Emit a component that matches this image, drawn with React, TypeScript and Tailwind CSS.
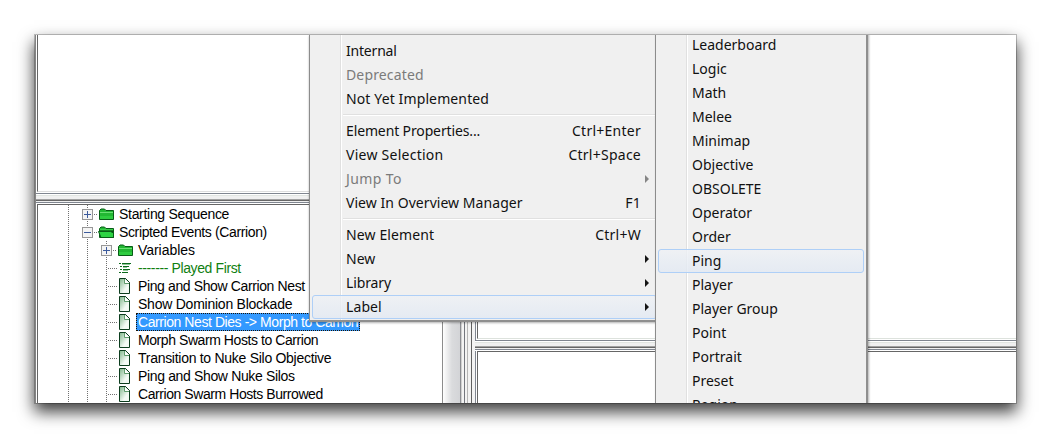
import React from "react";

type Entry = { label: string; keys?: string; sub?: boolean; muted?: boolean; active?: boolean; track?: string } | "separator";

const mainMenu: Entry[] = [
  { label: "Internal", track: "tracking-[-0.2px]" },
  { label: "Deprecated", muted: true, track: "tracking-[0.15px]" },
  { label: "Not Yet Implemented", track: "tracking-[0.12px]" },
  "separator",
  { label: "Element Properties...", keys: "Ctrl+Enter", track: "tracking-[-0.13px]" },
  { label: "View Selection", keys: "Ctrl+Space", track: "tracking-[0.26px]" },
  { label: "Jump To", sub: true, muted: true, track: "tracking-[0.4px]" },
  { label: "View In Overview Manager", keys: "F1", track: "tracking-[0.05px]" },
  "separator",
  { label: "New Element", keys: "Ctrl+W", track: "tracking-[0.12px]" },
  { label: "New", sub: true },
  { label: "Library", sub: true, track: "tracking-[-0.12px]" },
  { label: "Label", sub: true, active: true, track: "tracking-[0.1px]" },
];

const labelMenu: Entry[] = [
  "Leaderboard", "Logic", "Math", "Melee", "Minimap", "Objective", "OBSOLETE", "Operator",
  "Order", "Ping", "Player", "Player Group", "Point", "Portrait", "Preset", "Region",
].map((label) => ({ label, active: label === "Ping" }));

function MenuRows({ entries }: { entries: Entry[] }) {
  return (
    <>
      {entries.map((e, i) =>
        e === "separator" ? (
          <div key={i} className="ml-[31px] flex h-2 flex-col justify-center">
            <div className="h-px bg-[#e0e0e0]" />
            <div className="h-px bg-white" />
          </div>
        ) : (
          <div
            key={i}
            className={
              "relative flex h-6 items-center leading-6 " +
              (e.active
                ? "rounded-[3px] border border-[#aecff7] bg-linear-to-b from-[#eef1f5]/80 to-[#e2e9f3]/80 pl-[33px] pr-[15px] "
                : "pl-[34px] pr-[16px] ") +
              (e.muted ? "text-[#7b7b7b]" : "text-[#111]")
            }
          >
            <span className={"grow whitespace-pre " + (e.track ?? "")}>{e.label}</span>
            {e.keys && <span className="tracking-[0.25px]">{e.keys}</span>}
            {e.sub && (
              <svg className="-mr-[8px]" width="4" height="8" viewBox="0 0 4 8">
                <path d="M0 0L4 4L0 8Z" fill={e.muted ? "#858585" : "#151515"} />
              </svg>
            )}
          </div>
        ),
      )}
    </>
  );
}

function Toggle({ open }: { open?: boolean }) {
  return (
    <svg width="11" height="11" viewBox="0 0 11 11" className="relative shrink-0" shapeRendering="crispEdges">
      <rect x=".5" y=".5" width="10" height="10" fill="#f4f4f4" stroke="#979797" />
      <path d={open ? "M2 5.5H9" : "M2 5.5H9M5.5 2V9"} stroke="#3b5a9c" />
    </svg>
  );
}

function Folder({ open }: { open?: boolean }) {
  return (
    <svg width="17" height="13" viewBox="0 0 17 13" className="shrink-0">
      <path d="M1.5 11.5V2.5L3 1H6.5L8 2.5H15.5V11.5Z" fill="#22b833" stroke="#075c16" />
      {open ? (
        <>
          <path d="M2 3.5H15" stroke="#3bd04a" />
          <path d="M2 4.5H15V6H2Z" fill="#064b12" />
          <path d="M.5 5.5H12.5L15.5 7V11.5H3Z" fill="#2ed344" stroke="#075c16" />
        </>
      ) : (
        <>
          <path d="M2 4.5H15" stroke="#6be074" />
          <path d="M2 8H15V11H2Z" fill="#2ecc40" />
        </>
      )}
    </svg>
  );
}

function Page() {
  return (
    <svg width="11" height="16" viewBox="0 0 11 16" className="shrink-0">
      <defs>
        <linearGradient id="sheet" x1="0" y1="0" x2="1" y2="1">
          <stop offset="0" stopColor="#7fb58a" />
          <stop offset=".65" stopColor="#f4faf5" />
        </linearGradient>
      </defs>
      <path d="M.5 .5H6.5L10.5 4.5V15.5H.5Z" fill="url(#sheet)" stroke="#0b3c1d" />
      <path d="M5.5 1V5.5H10" fill="none" stroke="#5f9b6d" />
      <path d="M6 1L10 5H6Z" fill="#fff" />
      <path d="M6.5 .5L10.5 4.5" stroke="#0b3c1d" strokeDasharray="1.4 .9" />
    </svg>
  );
}

function Lines() {
  return (
    <svg width="12" height="12" viewBox="0 0 12 12" className="shrink-0" shapeRendering="crispEdges">
      <path d="M0 1.5H2M3 1.5H12M1 4.5H3M4 4.5H10M1 7.5H3M4 7.5H11M0 10.5H2M3 10.5H9" stroke="#0b6a1c" />
      <path d="M3 2.5H11M4 5.5H8M4 8.5H9" stroke="#8fc898" />
    </svg>
  );
}

const dotsDown = "w-px shrink-0 bg-[linear-gradient(#707070_50%,#ffffff_50%)] bg-[length:1px_2px] ";
const dotsAcross = "h-px shrink-0 bg-[linear-gradient(90deg,#707070_50%,#ffffff_50%)] bg-[length:2px_1px] ";

type TreeNode = { text: string; depth: number; icon: "folder" | "open" | "page" | "lines"; track: string; selected?: boolean };
const nodes: TreeNode[] = [
  { text: "Starting Sequence", depth: 0, icon: "folder", track: "tracking-[-0.3px]" },
  { text: "Scripted Events (Carrion)", depth: 0, icon: "open", track: "tracking-[-0.37px]" },
  { text: "Variables", depth: 1, icon: "folder", track: "tracking-[-0.05px]" },
  { text: "------- Played First", depth: 1, icon: "lines", track: "tracking-[-0.38px]" },
  { text: "Ping and Show Carrion Nest", depth: 1, icon: "page", track: "tracking-[-0.38px]" },
  { text: "Show Dominion Blockade", depth: 1, icon: "page", track: "tracking-[-0.24px]" },
  { text: "Carrion Nest Dies -> Morph to Carrion", depth: 1, icon: "page", track: "tracking-[-0.43px]", selected: true },
  { text: "Morph Swarm Hosts to Carrion", depth: 1, icon: "page", track: "tracking-[-0.43px]" },
  { text: "Transition to Nuke Silo Objective", depth: 1, icon: "page", track: "tracking-[-0.28px]" },
  { text: "Ping and Show Nuke Silos", depth: 1, icon: "page", track: "tracking-[-0.35px]" },
  { text: "Carrion Swarm Hosts Burrowed", depth: 1, icon: "page", track: "tracking-[-0.43px]" },
];

function TreeRow({ node }: { node: TreeNode }) {
  const folder = node.icon === "folder" || node.icon === "open";
  return (
    <div className="flex h-[18px] items-stretch pl-[30px]">
      <span className={dotsDown} />
      {node.depth === 1 ? (
        <>
          <span className="w-[18px] shrink-0" />
          <span className={dotsDown} />
        </>
      ) : null}
      <span className={folder ? "w-[13px] shrink-0" : "w-[18px] shrink-0"} />
      {folder ? (
        <span className="relative flex w-4 shrink-0 items-center pt-px">
          <span className={dotsDown + "absolute left-[5px] top-0 h-full"} />
          <Toggle open={node.icon === "open"} />
          <span className={dotsAcross + "ml-px w-[3px]"} />
        </span>
      ) : (
        <span className="mr-px flex w-[12px] shrink-0 items-center">
          <span className={dotsDown + "self-stretch"} />
          <span className={dotsAcross + "ml-px mt-px w-[9px]"} />
        </span>
      )}
      <span className={"flex shrink-0 items-center " + (folder ? "w-[18px]" : "w-4")}>
        {folder ? <Folder open={node.icon === "open"} /> : node.icon === "page" ? <Page /> : <Lines />}
      </span>
      <span
        className={
          "ml-px whitespace-pre border px-px text-[14px] leading-[17px] " + node.track + " " +
          (node.selected
            ? "border-dotted border-[#1c1408] bg-[#3399ff] text-white"
            : "border-transparent " + (node.icon === "lines" ? "text-[#118011]" : "text-black"))
        }
      >
        {node.text}
      </span>
    </div>
  );
}

function Divider() {
  return (
    <div className="flex h-[11px] shrink-0 flex-col bg-[#f0f0f0]">
      <i className="h-px bg-[#808690]" />
      <i className="h-px bg-white" />
      <i className="h-px bg-[#e1e5e1]" />
      <i className="h-[3px] bg-[#f0f0f0]" />
      <i className="h-px bg-[#a2a2a2]" />
      <i className="h-px bg-[#666]" />
      <i className="h-px bg-[#f0f0f0]" />
      <i className="h-px bg-[#808690]" />
      <i className="h-px bg-white" />
    </div>
  );
}

export default function App() {
  return (
    <main className="h-[438px] w-[1051px] overflow-hidden bg-white pl-[35px] pt-[35px] font-['Liberation_Sans',Arial,sans-serif] text-[14px]">
      <div className="h-[368px] w-[981px] shadow-[0_0_0_1px_rgba(0,0,0,0.22),0_8px_15px_1px_rgba(0,0,0,0.75)]">
        <div className="relative flex h-full overflow-hidden bg-white">
          <section className="flex w-[426px] shrink-0 flex-col border-l border-[#858585]">
            <div className="ml-px h-[157px] shrink-0 border-b border-l border-b-[#dedede] border-l-[#666]" />
            <div className="h-px shrink-0" />
            <Divider />
            <div className="ml-px flex min-h-0 grow border-l border-t border-[#666]">
              <div className="flex min-w-0 grow flex-col overflow-hidden">
                {nodes.map((n) => <TreeRow key={n.text} node={n} />)}
              </div>
              <div className="flex w-[19px] shrink-0 border-l border-[#8c8c8c] bg-linear-to-r from-white via-[#dadbdd] via-50% to-[#d2d3d6]">
                <span className="ml-auto w-px bg-[#8b8d92]" />
              </div>
            </div>
          </section>
          <div className="flex w-[14px] shrink-0 bg-[#f3f3f3]">
            <i className="mr-[2px] w-px bg-[#d0d0d0]" />
            <i className="mr-[2px] w-px bg-[#73767d]" />
            <i className="mr-[3px] w-px bg-[#b5b5b5]" />
            <i className="w-px bg-[#606060]" />
          </div>
          <section className="flex min-w-0 grow flex-col border-l border-[#808690]">
            <div className="ml-px h-[304px] shrink-0 border-b border-l border-b-[#dde2dd] border-l-[#666]" />
            <div className="h-px shrink-0" />
            <div className="-ml-px shrink-0"><Divider /></div>
            <div className="ml-px grow border-l border-t border-[#666]" />
          </section>

          <div className="absolute left-[274px] top-0 h-[287px] w-[348px] border-b-2 border-l border-b-[#8f8f8f] border-l-[#8c8c8c] bg-[#f0f0f0] pl-[2px] pt-1 font-['Noto_Sans','Open_Sans',sans-serif] text-[14px] shadow-[0_1px_2px_rgba(0,0,0,0.3)]">
            <span className="absolute left-[30px] top-0 h-full w-[2px] border-l border-[#e0e0e0] bg-white" />
            <MenuRows entries={mainMenu} />
          </div>
          <div className="absolute -top-2 left-[620px] h-[384px] w-[213px] border-l border-r-2 border-l-[#8c8c8c] border-r-[#8f8f8f] bg-[#f0f0f0] pl-[2px] pr-[2px] pt-[6px] font-['Noto_Sans','Open_Sans',sans-serif] text-[14px] shadow-[1px_0_2px_rgba(0,0,0,0.3)]">
            <span className="absolute left-[30px] top-0 h-full w-[2px] border-l border-[#e0e0e0] bg-white" />
            <MenuRows entries={labelMenu} />
          </div>
        </div>
      </div>
    </main>
  );
}
